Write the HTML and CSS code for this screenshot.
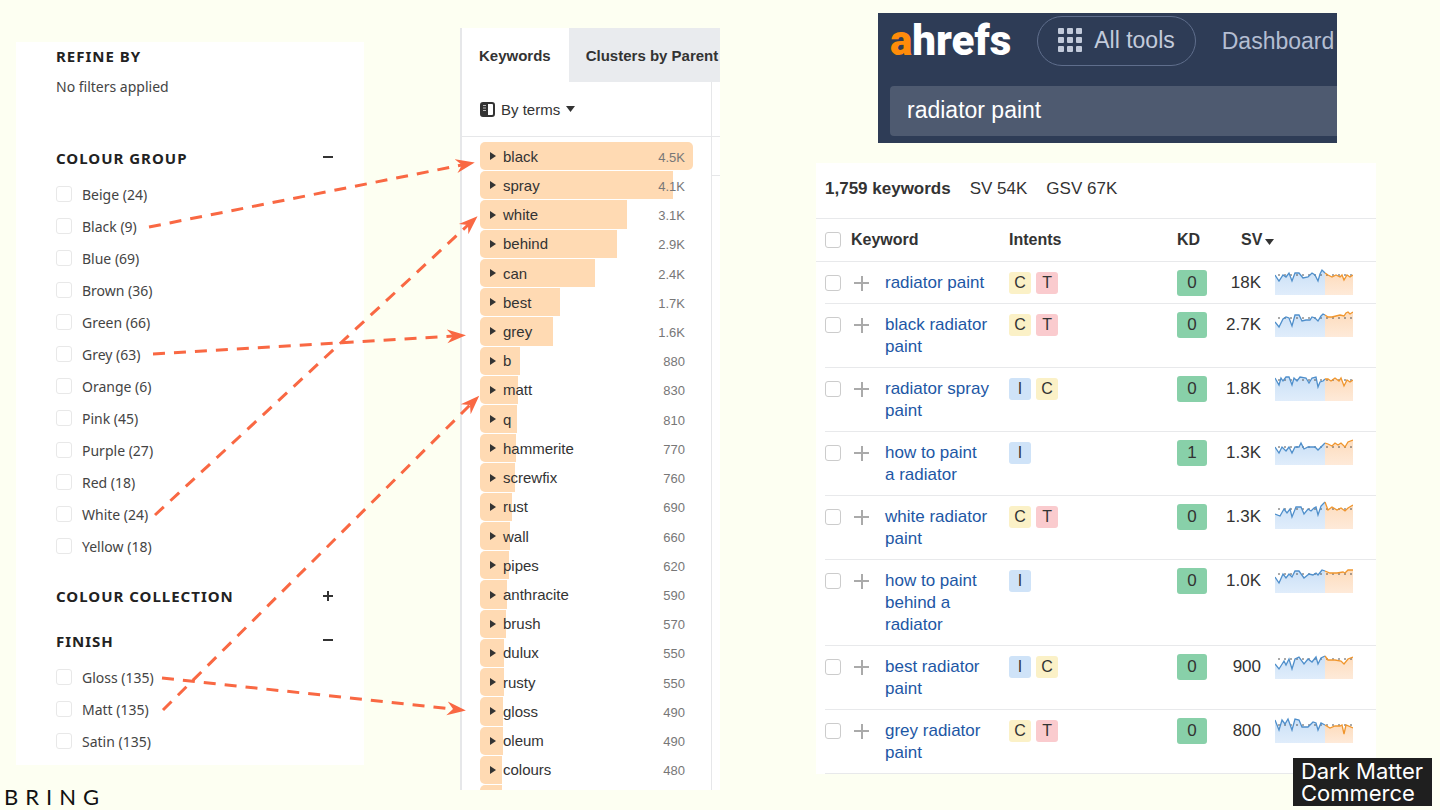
FILE: index.html
```
<!DOCTYPE html>
<html lang="en">
<head>
    <meta charset="UTF-8">
    <meta name="viewport" content="width=device-width, initial-scale=1.0">
    <title>Radiator paint keywords</title>
    <link rel="stylesheet" href="styles.css">
</head>
<body>
    <main class="slide">
        <aside class="filters">
            <h2>REFINE BY</h2>
            <p class="applied">No filters applied</p>
            <section class="filter-group">
                <h3>COLOUR GROUP <button class="toggle" aria-label="Collapse colour group"><svg width="12" height="12" viewBox="0 0 12 12" fill="#333"><path d="M1 4h10v2H1z"/></svg></button></h3>
                <label><input type="checkbox">Beige (24)</label>
                <label><input type="checkbox">Black (9)</label>
                <label><input type="checkbox">Blue (69)</label>
                <label><input type="checkbox">Brown (36)</label>
                <label><input type="checkbox">Green (66)</label>
                <label><input type="checkbox">Grey (63)</label>
                <label><input type="checkbox">Orange (6)</label>
                <label><input type="checkbox">Pink (45)</label>
                <label><input type="checkbox">Purple (27)</label>
                <label><input type="checkbox">Red (18)</label>
                <label><input type="checkbox">White (24)</label>
                <label><input type="checkbox">Yellow (18)</label>
            </section>
            <section class="filter-group closed">
                <h3>COLOUR COLLECTION <button class="toggle" aria-label="Expand colour collection"><svg width="12" height="12" viewBox="0 0 12 12" fill="#333"><path d="M1 5h4V1h2v4h4v2H7v4H5V7H1z"/></svg></button></h3>
            </section>
            <section class="filter-group">
                <h3>FINISH <button class="toggle" aria-label="Collapse finish"><svg width="12" height="12" viewBox="0 0 12 12" fill="#333"><path d="M1 4h10v2H1z"/></svg></button></h3>
                <label><input type="checkbox">Gloss (135)</label>
                <label><input type="checkbox">Matt (135)</label>
                <label><input type="checkbox">Satin (135)</label>
            </section>
        </aside>

        <section class="terms">
            <nav class="tabs">
                <button class="tab active">Keywords</button>
                <button class="tab">Clusters by Parent</button>
            </nav>
            <div class="terms-body">
                <div class="terms-main">
                    <button class="by-terms">
                        <svg width="15" height="15" viewBox="0 0 15 15"><rect x="1" y="1" width="13" height="13" rx="2" fill="#fff" stroke="#333" stroke-width="2"/><path d="M1 1h7v13H1z" fill="#333"/><path d="M3 3.500h3M3 6h3M3 8.500h3" stroke="#bbb"/></svg>
                        By terms
                        <svg width="9" height="6" viewBox="0 0 9 6"><path d="M0 0h9L4.500 6z" fill="#333"/></svg>
                    </button>
                    <ul class="term-list">
                        <li><i style="width:100%"></i><span>black</span><b>4.5K</b></li>
                        <li><i style="width:90.500%"></i><span>spray</span><b>4.1K</b></li>
                        <li><i style="width:69%"></i><span>white</span><b>3.1K</b></li>
                        <li><i style="width:64.500%"></i><span>behind</span><b>2.9K</b></li>
                        <li><i style="width:54%"></i><span>can</span><b>2.4K</b></li>
                        <li><i style="width:37.500%"></i><span>best</span><b>1.7K</b></li>
                        <li><i style="width:34.500%"></i><span>grey</span><b>1.6K</b></li>
                        <li><i style="width:19%"></i><span>b</span><b>880</b></li>
                        <li><i style="width:18%"></i><span>matt</span><b>830</b></li>
                        <li><i style="width:17.500%"></i><span>q</span><b>810</b></li>
                        <li><i style="width:17%"></i><span>hammerite</span><b>770</b></li>
                        <li><i style="width:16.500%"></i><span>screwfix</span><b>760</b></li>
                        <li><i style="width:15%"></i><span>rust</span><b>690</b></li>
                        <li><i style="width:14%"></i><span>wall</span><b>660</b></li>
                        <li><i style="width:13.500%"></i><span>pipes</span><b>620</b></li>
                        <li><i style="width:12.500%"></i><span>anthracite</span><b>590</b></li>
                        <li><i style="width:12%"></i><span>brush</span><b>570</b></li>
                        <li><i style="width:11.500%"></i><span>dulux</span><b>550</b></li>
                        <li><i style="width:11.500%"></i><span>rusty</span><b>550</b></li>
                        <li><i style="width:11%"></i><span>gloss</span><b>490</b></li>
                        <li><i style="width:11%"></i><span>oleum</span><b>490</b></li>
                        <li><i style="width:10.500%"></i><span>colours</span><b>480</b></li>
                        <li class="cut"><i style="width:10.500%"></i></li>
                    </ul>
                </div>
                <div class="terms-side"></div>
            </div>
        </section>

        <div class="report">
            <header class="topbar">
                <nav class="topnav">
                    <a class="brand" href="#"><span>a</span>hrefs</a>
                    <button class="all-tools">
                        <svg width="24" height="24" viewBox="0 0 24 24" fill="#c3cbdb">
                            <rect x="0" y="0" width="6" height="6" rx="1"/><rect x="9" y="0" width="6" height="6" rx="1"/><rect x="18" y="0" width="6" height="6" rx="1"/>
                            <rect x="0" y="9" width="6" height="6" rx="1"/><rect x="9" y="9" width="6" height="6" rx="1"/><rect x="18" y="9" width="6" height="6" rx="1"/>
                            <rect x="0" y="18" width="6" height="6" rx="1"/><rect x="9" y="18" width="6" height="6" rx="1"/><rect x="18" y="18" width="6" height="6" rx="1"/>
                        </svg>
                        All tools
                    </button>
                    <a class="dash" href="#">Dashboard</a>
                </nav>
                <input class="search" type="text" value="radiator paint" aria-label="Keyword">
            </header>

            <section class="results">
                <div class="summary"><strong>1,759 keywords</strong><span>SV 54K</span><span>GSV 67K</span></div>
                <table>
                    <colgroup>
                        <col class="col-edge">
                        <col class="col-check">
                        <col class="col-add">
                        <col class="col-word">
                        <col>
                        <col class="col-kd">
                        <col class="col-sv">
                        <col class="col-trend">
                    </colgroup>
                    <thead>
                        <tr>
                            <th></th>
                            <th class="check"><input type="checkbox" aria-label="Select all"></th>
                            <th colspan="2">Keyword</th>
                            <th>Intents</th>
                            <th>KD</th>
                            <th class="sorted">SV<svg width="9" height="6" viewBox="0 0 9 6"><path d="M0 0h9L4.500 6z" fill="#333"/></svg></th>
                            <th></th>
                        </tr>
                    </thead>
                    <tbody>
                        <tr>
                            <td class="edge"></td>
                            <td class="check"><input type="checkbox" aria-label="Select radiator paint"></td>
                            <td class="add"><button aria-label="Add"></button></td>
                            <td class="word"><a href="#">radiator paint</a></td>
                            <td class="intents"><span class="c">C</span><span class="t">T</span></td>
                            <td class="kd"><span>0</span></td>
                            <td class="sv">18K</td>
                            <td class="trend"><svg class="spark" data-avg="8" data-blue="0,8 4,14 8,8 11,10 14,6 17,14 20,6 24,6 28,11 33,10 37,6 40,8 43,14 45,7 47,3 50,6" data-orange="50,6 53,8 57,10 61,8 65,10 67,8 69,13 72,8 75,10 78,8"></svg></td>
                        </tr>
                        <tr>
                            <td class="edge"></td>
                            <td class="check"><input type="checkbox" aria-label="Select black radiator paint"></td>
                            <td class="add"><button aria-label="Add"></button></td>
                            <td class="word"><a href="#">black radiator paint</a></td>
                            <td class="intents"><span class="c">C</span><span class="t">T</span></td>
                            <td class="kd"><span>0</span></td>
                            <td class="sv">2.7K</td>
                            <td class="trend"><svg class="spark" data-avg="9" data-blue="0,13 4,18 8,10 11,8 14,9 17,17 20,6 24,6 27,12 31,11 35,11 37,8 40,9 43,12 46,7 48,5 50,6" data-orange="50,6 53,8 57,8 61,7 65,6 69,7 71,4 73,3 75,5 78,3"></svg></td>
                        </tr>
                        <tr>
                            <td class="edge"></td>
                            <td class="check"><input type="checkbox" aria-label="Select radiator spray paint"></td>
                            <td class="add"><button aria-label="Add"></button></td>
                            <td class="word"><a href="#">radiator spray paint</a></td>
                            <td class="intents"><span class="i">I</span><span class="c">C</span></td>
                            <td class="kd"><span>0</span></td>
                            <td class="sv">1.8K</td>
                            <td class="trend"><svg class="spark" data-avg="7" data-blue="0,5 4,12 6,5 8,8 11,4 14,4 17,12 19,5 22,8 25,4 31,5 34,10 37,5 41,4 43,14 45,9 48,8 50,6" data-orange="50,6 53,6 56,8 60,5 64,8 66,5 69,13 72,7 75,9 78,7"></svg></td>
                        </tr>
                        <tr>
                            <td class="edge"></td>
                            <td class="check"><input type="checkbox" aria-label="Select how to paint a radiator"></td>
                            <td class="add"><button aria-label="Add"></button></td>
                            <td class="word"><a href="#">how to paint a radiator</a></td>
                            <td class="intents"><span class="i">I</span></td>
                            <td class="kd"><span>1</span></td>
                            <td class="sv">1.3K</td>
                            <td class="trend"><svg class="spark" data-avg="10" data-blue="0,10 4,16 7,10 11,14 14,10 17,16 20,10 24,10 26,6 29,12 33,10 40,10 43,13 46,10 50,6" data-orange="50,6 53,7 57,9 60,6 63,8 66,6 70,10 73,5 78,3"></svg></td>
                        </tr>
                        <tr>
                            <td class="edge"></td>
                            <td class="check"><input type="checkbox" aria-label="Select white radiator paint"></td>
                            <td class="add"><button aria-label="Add"></button></td>
                            <td class="word"><a href="#">white radiator paint</a></td>
                            <td class="intents"><span class="c">C</span><span class="t">T</span></td>
                            <td class="kd"><span>0</span></td>
                            <td class="sv">1.3K</td>
                            <td class="trend"><svg class="spark" data-avg="8" data-blue="0,13 5,15 9,8 12,12 15,8 17,16 21,6 26,6 29,13 33,8 36,10 39,7 41,6 43,14 46,5 50,1" data-orange="50,1 53,9 57,6 62,9 66,7 70,10 73,7 78,4"></svg></td>
                        </tr>
                        <tr>
                            <td class="edge"></td>
                            <td class="check"><input type="checkbox" aria-label="Select how to paint behind a radiator"></td>
                            <td class="add"><button aria-label="Add"></button></td>
                            <td class="word"><a href="#">how to paint behind a radiator</a></td>
                            <td class="intents"><span class="i">I</span></td>
                            <td class="kd"><span>0</span></td>
                            <td class="sv">1.0K</td>
                            <td class="trend"><svg class="spark" data-avg="9" data-blue="0,12 4,18 8,9 11,13 14,9 17,12 20,6 24,6 29,13 34,9 38,10 41,8 43,10 47,5 50,6" data-orange="50,6 55,8 62,8 68,7 70,8 73,5 78,5"></svg></td>
                        </tr>
                        <tr>
                            <td class="edge"></td>
                            <td class="check"><input type="checkbox" aria-label="Select best radiator paint"></td>
                            <td class="add"><button aria-label="Add"></button></td>
                            <td class="word"><a href="#">best radiator paint</a></td>
                            <td class="intents"><span class="i">I</span><span class="c">C</span></td>
                            <td class="kd"><span>0</span></td>
                            <td class="sv">900</td>
                            <td class="trend"><svg class="spark" data-avg="8" data-blue="0,13 4,18 9,10 11,14 14,8 17,18 20,8 24,6 29,13 33,8 37,11 41,6 43,13 46,7 50,5" data-orange="50,5 53,9 60,9 66,10 69,13 73,8 78,6"></svg></td>
                        </tr>
                        <tr>
                            <td class="edge"></td>
                            <td class="check"><input type="checkbox" aria-label="Select grey radiator paint"></td>
                            <td class="add"><button aria-label="Add"></button></td>
                            <td class="word"><a href="#">grey radiator paint</a></td>
                            <td class="intents"><span class="c">C</span><span class="t">T</span></td>
                            <td class="kd"><span>0</span></td>
                            <td class="sv">800</td>
                            <td class="trend"><svg class="spark" data-avg="10" data-blue="0,5 4,15 7,5 10,9 13,4 17,15 20,4 24,5 27,12 33,12 38,7 41,8 43,15 46,8 50,10" data-orange="50,10 55,13 60,11 65,11 67,10 69,19 71,10 78,13"></svg></td>
                        </tr>
                    </tbody>
                </table>
            </section>
        </div>

        <svg class="arrows" viewBox="0 0 1440 810" preserveAspectRatio="none">
            <defs>
                <marker id="head" markerUnits="userSpaceOnUse" markerWidth="20" markerHeight="16" refX="6" refY="8" orient="auto">
                    <path d="M0 1L19 8L0 15L6 8z" fill="#f96843"/>
                </marker>
            </defs>
            <line x1="149" y1="227" x2="462" y2="165"/>
            <line x1="153" y1="354" x2="453" y2="336"/>
            <line x1="155" y1="515" x2="468" y2="225"/>
            <line x1="162" y1="678" x2="453" y2="709"/>
            <line x1="163" y1="710" x2="470" y2="405"/>
        </svg>

        <div class="logo-bring">BRING</div>
        <div class="logo-dmc">Dark Matter<br>Commerce</div>
    </main>

    <script>
        // draws the small trend charts
        document.querySelectorAll('.spark').forEach(svg => {
            const { blue, orange, avg } = svg.dataset;
            svg.setAttribute('viewBox', '0 0 78 28');
            svg.innerHTML = `
                <defs>
                    <linearGradient id="blue" x2="0" y2="1"><stop stop-color="#cbe0f6"/><stop offset="1" stop-color="#e0edfb"/></linearGradient>
                    <linearGradient id="orange" x2="0" y2="1"><stop stop-color="#fddcbd"/><stop offset="1" stop-color="#feead9"/></linearGradient>
                </defs>
                <polygon points="${blue} 50,28 0,28" fill="url(#blue)"/>
                <polygon points="${orange} 78,28 50,28" fill="url(#orange)"/>
                <line x1="3" y1="${avg}" x2="78" y2="${avg}" stroke="#555" stroke-dasharray="2 4"/>
                <polyline points="${blue}" fill="none" stroke="#4f8fcb" stroke-width="1.3"/>
                <polyline points="${orange}" fill="none" stroke="#f0962e" stroke-width="1.3"/>
            `;
        });
    </script>
</body>
</html>
```
FILE: styles.css
```
* {
    box-sizing: border-box;
}
body {
    margin: 0;
    background: #fdfff2;
    font-family: "Liberation Sans", Arial, sans-serif;
    color: #333;
}
button {
    padding: 0;
    border: none;
    background: none;
    font: inherit;
    color: inherit;
}
a {
    text-decoration: none;
}
.slide {
    position: relative;
    display: grid;
    grid-template-columns: 348fr 260fr 560fr;
    column-gap: 96px;
    min-height: 100vh;
    padding: 0 64px 20px 16px;
    align-items: start;
}
input[type="checkbox"] {
    appearance: none;
    flex: none;
    width: 16px;
    height: 16px;
    margin: 0;
    border: 1px solid #ccc;
    border-radius: 3px;
    background: #fff;
}

/* filters */
.filters {
    margin-top: 42px;
    padding: 0 30px 8px 40px;
    background: #fff;
    font-family: "Noto Sans", sans-serif;
    font-size: 14px;
    color: #444;
}
.filters h2,
.filters h3 {
    margin: 0;
    font-size: 15px;
    letter-spacing: 1px;
    color: #222;
}
.filters h2 {
    line-height: 28px;
}
.applied {
    margin: 0 0 34px;
    line-height: 34px;
}
.filter-group {
    margin-bottom: 14px;
}
.filter-group.closed {
    margin-bottom: 5px;
}
.filter-group:last-child {
    margin-bottom: 0;
}
.filters h3 {
    display: flex;
    justify-content: space-between;
    align-items: center;
    line-height: 40px;
}
.toggle {
    display: flex;
}
.filters label {
    display: flex;
    align-items: center;
    gap: 10px;
    height: 32px;
}
.filters input {
    border-color: #e8e8e8;
}

/* terms */
.terms {
    display: flex;
    flex-direction: column;
    align-self: stretch;
    margin-top: 28px;
    border-left: 2px solid #e6e7e9;
    background: #fff;
    overflow: hidden;
}
.tabs {
    display: flex;
    height: 54px;
    background: #e9ebee;
}
.tab {
    flex: none;
    padding: 0 18px 0 17px;
    font-size: 15px;
    font-weight: bold;
}
.tab.active {
    background: #fff;
}
.terms-body {
    flex: 1;
    display: grid;
    grid-template-columns: 1fr 9px;
}
.terms-main {
    display: flex;
    flex-direction: column;
}
.by-terms {
    display: flex;
    align-items: center;
    gap: 6px;
    height: 55px;
    padding-left: 18px;
    border-bottom: 1px solid #e6e7e9;
    font-size: 15px;
}
.terms-side {
    border-left: 1px solid #e6e7e9;
    background: linear-gradient(#e6e7e9, #e6e7e9) 0 54px / 100% 1px no-repeat, linear-gradient(#e6e7e9, #e6e7e9) 0 93px / 100% 1px no-repeat;
}
.term-list {
    flex: 1;
    display: grid;
    grid-template-rows: repeat(22, 1fr) 5px;
    margin: 0;
    padding: 5px 18px 0;
    list-style: none;
    font-size: 15px;
}
.term-list li {
    display: grid;
    grid-template-columns: 1fr auto;
    align-items: center;
    padding-bottom: 1px;
}
.term-list i {
    grid-area: 1 / 1 / 2 / 3;
    align-self: stretch;
    border-radius: 5px 0 0 5px;
    background: #ffdab3;
}
.term-list li:first-child i {
    border-radius: 5px;
}
.term-list .cut {
    padding: 0;
}
.term-list .cut i {
    border-radius: 5px 0 0 0;
}
.term-list span {
    grid-area: 1 / 1;
    display: flex;
    align-items: center;
    gap: 7px;
    padding-left: 10px;
}
.term-list span::before {
    content: "";
    border: 4px solid transparent;
    border-left: 6px solid #333;
    border-right: none;
}
.term-list b {
    grid-area: 1 / 2;
    padding: 2px 8px 0 0;
    font-size: 13px;
    font-weight: normal;
    color: #777;
}

/* top bar */
.topbar {
    margin: 13px 39px 0 62px;
    height: 130px;
    padding: 3px 0 0 12px;
    background: #2e3c56;
    overflow: hidden;
}
.topnav {
    display: flex;
    align-items: center;
    font-size: 23px;
    white-space: nowrap;
}
.brand {
    margin-right: 26px;
    font-family: Roboto, sans-serif;
    font-size: 42px;
    font-weight: 900;
    line-height: 48px;
    color: #fff;
}
.brand span {
    color: #ff8c0a;
}
.all-tools {
    display: flex;
    align-items: center;
    gap: 12px;
    height: 50px;
    margin-right: 26px;
    padding: 0 20px 2px;
    border: 1px solid #5f6e8c;
    border-radius: 25px;
    color: #c3cbdb;
}
.dash {
    color: #b4bed2;
}
.search {
    display: block;
    width: 100%;
    height: 50px;
    margin-top: 20px;
    padding: 0 17px 2px;
    border: none;
    border-radius: 4px 0 0 4px;
    background: #4e5a70;
    font: inherit;
    font-size: 23px;
    color: #fff;
}

/* results */
.results {
    margin-top: 20px;
    background: #fff;
}
.summary {
    display: flex;
    align-items: center;
    gap: 19px;
    height: 55px;
    padding: 0 9px 4px;
    font-size: 17px;
}
table {
    width: 100%;
    table-layout: fixed;
    border-collapse: separate;
    border-spacing: 0;
    font-size: 17px;
    line-height: 22px;
}
.col-edge {
    width: 9px;
}
.col-check {
    width: 26px;
}
.col-add {
    width: 34px;
}
.col-word {
    width: 124px;
}
.col-kd {
    width: 30px;
}
.col-sv {
    width: 54px;
}
.col-trend {
    width: 115px;
}
th {
    height: 44px;
    padding: 0;
    border-top: 1px solid #e8e9eb;
    border-bottom: 1px solid #e8e9eb;
    font-size: 16px;
    text-align: left;
}
td {
    padding: 10px 0 9px;
    border-bottom: 1px solid #e8e9eb;
    vertical-align: top;
}
td.edge {
    border: none;
}
.check input {
    display: block;
    margin: 3px 0;
}
.add button {
    display: block;
    width: 15px;
    height: 22px;
    margin-left: 3px;
    background: linear-gradient(#aaa, #aaa) center / 15px 2px no-repeat, linear-gradient(#aaa, #aaa) center / 2px 15px no-repeat;
}
td.word {
    padding-right: 19px;
}
.word a {
    color: #1d57a5;
}
.intents {
    font-size: 16px;
}
.intents span {
    display: inline-block;
    width: 22px;
    margin-right: 5px;
    border-radius: 3px;
    text-align: center;
}
.intents .c {
    background: #fbf1c7;
}
.intents .t {
    background: #facbce;
}
.intents .i {
    background: #cfe3f8;
}
td.kd {
    padding-top: 8px;
    padding-bottom: 0;
}
.kd span {
    display: block;
    line-height: 26px;
    border-radius: 3px;
    background: #88d0a9;
    text-align: center;
}
.sv {
    text-align: right;
}
.sorted {
    padding-left: 34px;
    white-space: nowrap;
}
.sorted svg {
    margin-left: 3px;
}
.trend {
    padding: 5px 0 0 14px;
}
.spark {
    display: block;
    width: 78px;
    height: 28px;
}

/* dashed arrows between the two lists */
.arrows {
    position: absolute;
    inset: 0;
    width: 100%;
    height: 100%;
    pointer-events: none;
}
.arrows line {
    stroke: #f96843;
    stroke-width: 3;
    stroke-dasharray: 12 9;
    marker-end: url(#head);
}
.logo-bring {
    position: absolute;
    left: 4px;
    bottom: 0;
    font-family: Lato, sans-serif;
    font-size: 22px;
    line-height: 26px;
    letter-spacing: 7px;
    color: #111;
}
.logo-dmc {
    position: absolute;
    right: 8px;
    bottom: 4px;
    padding: 2px 9px 2px 8px;
    background: #1f1f1f;
    font-family: Inter, sans-serif;
    font-size: 22px;
    line-height: 22px;
    color: #fff;
}
```
